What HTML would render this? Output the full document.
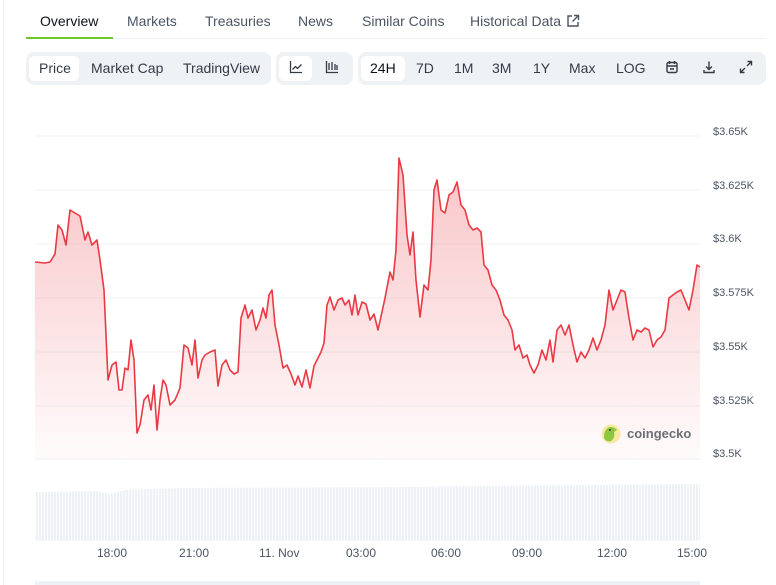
<!DOCTYPE html>
<html><head><meta charset="utf-8"><style>
*{box-sizing:border-box;margin:0;padding:0}
body{width:776px;height:585px;background:#fff;font-family:"Liberation Sans",sans-serif;position:relative;overflow:hidden;color:#4b5563}
.tabs{position:absolute;left:26px;top:0;width:740px;height:39px;border-bottom:1px solid #eceff3}
.tab{position:absolute;top:13px;font-size:14px;color:#4b5563}
.tab.a{color:#0d1217}
.ul{position:absolute;left:26px;top:37px;width:87px;height:2px;background:#6cc82b}
.grp{position:absolute;top:52px;height:33px;background:#eff2f5;border-radius:8px}
.btn{position:absolute;top:58px;font-size:14px;color:#333b47;line-height:20px}
.sel{position:absolute;top:56px;height:25px;background:#fff;border-radius:6px}
.yl{position:absolute;left:713px;font-size:11px;color:#4b5563}
.xl{position:absolute;top:546px;font-size:12px;color:#4b5563}
</style></head><body>
<div style="position:absolute;left:3px;top:0;width:1px;height:585px;background:#eef0f3"></div>
<div class="tabs"></div>
<div class="tab a" style="left:40px">Overview</div>
<div class="tab" style="left:127px">Markets</div>
<div class="tab" style="left:205px">Treasuries</div>
<div class="tab" style="left:298px">News</div>
<div class="tab" style="left:362px">Similar Coins</div>
<div class="tab" style="left:470px">Historical Data</div>
<svg style="position:absolute;left:566px;top:14px" width="14" height="14" viewBox="0 0 14 14" fill="none" stroke="#4b5563" stroke-width="1.4"><path d="M6 2H2v10h10V8M8 1.5h4.5V6M12.5 1.5L6.5 7.5"/></svg>
<div class="ul"></div>

<div class="grp" style="left:26px;width:245px"></div>
<div class="sel" style="left:29px;width:50px"></div>
<div class="btn" style="left:39px">Price</div>
<div class="btn" style="left:91px">Market Cap</div>
<div class="btn" style="left:183px">TradingView</div>
<div class="grp" style="left:276px;width:77px"></div>
<div class="sel" style="left:279px;width:33px"></div>
<svg style="position:absolute;left:289px;top:60px" width="14" height="14" viewBox="0 0 14 14" fill="none" stroke="#333b47" stroke-width="1.3"><path d="M1.5 1v11.5H13M3.5 9.5l3-3 2 2 4-4"/></svg>
<svg style="position:absolute;left:325px;top:60px" width="14" height="14" viewBox="0 0 14 14" fill="none" stroke="#333b47" stroke-width="1.3"><path d="M1.5 1v11.5H13M4 3v7M7 2v8M10 4v6M12 5v5"/></svg>
<div class="grp" style="left:358px;width:408px"></div>
<div class="sel" style="left:361px;width:44px"></div>
<div class="btn" style="left:370px;color:#0d1217">24H</div>
<div class="btn" style="left:416px">7D</div>
<div class="btn" style="left:454px">1M</div>
<div class="btn" style="left:492px">3M</div>
<div class="btn" style="left:533px">1Y</div>
<div class="btn" style="left:569px">Max</div>
<div class="btn" style="left:616px">LOG</div>
<svg style="position:absolute;left:665px;top:60px" width="14" height="14" viewBox="0 0 14 14" fill="none" stroke="#333b47" stroke-width="1.4"><rect x="2" y="2.5" width="10" height="10" rx="1.5"/><path d="M4.5 1v3M9.5 1v3M2 6h10M5 9h4"/></svg>
<svg style="position:absolute;left:702px;top:60px" width="14" height="14" viewBox="0 0 14 14" fill="none" stroke="#333b47" stroke-width="1.4"><path d="M7 1.5v7.5M4 6.5L7 9.5 10 6.5M2 10v2.5h10V10"/></svg>
<svg style="position:absolute;left:739px;top:60px" width="14" height="14" viewBox="0 0 14 14" fill="none" stroke="#333b47" stroke-width="1.4"><path d="M8.5 1.5h4v4M12.5 1.5L8 6M5.5 12.5h-4v-4M1.5 12.5L6 8"/></svg>

<svg style="position:absolute;left:0;top:0" width="776" height="585">
<defs><linearGradient id="g" x1="0" y1="0" x2="0" y2="1"><stop offset="0" stop-color="#ea3943" stop-opacity="0.3"/><stop offset="1" stop-color="#ea3943" stop-opacity="0.02"/></linearGradient>
<pattern id="v" width="3" height="60" patternUnits="userSpaceOnUse"><rect width="2.2" height="60" fill="#eef1f5"/></pattern></defs>
<g stroke="#eff1f4" stroke-width="1">
<line x1="35" y1="136" x2="700" y2="136"/><line x1="35" y1="190" x2="700" y2="190"/><line x1="35" y1="244" x2="700" y2="244"/><line x1="35" y1="298" x2="700" y2="298"/><line x1="35" y1="352" x2="700" y2="352"/><line x1="35" y1="406" x2="700" y2="406"/><line x1="35" y1="459" x2="700" y2="459"/>
</g>
<path d="M35 262 45 263 50 262 55 254 58 225 62 230 66 245 70 210 75 213 80 216 85 240 88 232 92 245 97 240 100 260 104 290 108 380 112 365 116 362 119 390 122 390 125 368 128 370 131 340 134 360 137 433 140 425 144 400 148 395 151 410 154 385 157 430 160 400 163 380 166 385 170 405 175 400 180 388 184 345 188 348 192 365 195 340 198 378 202 360 205 355 210 352 215 350 218 386 222 365 226 360 230 370 234 374 238 372 241 318 245 305 248 318 252 310 256 330 260 320 263 308 266 318 269 295 272 290 275 325 279 345 283 368 287 365 291 374 295 385 298 376 302 387 306 370 310 388 314 366 318 358 321 352 324 343 327 305 330 297 334 310 338 300 342 298 345 305 349 300 352 315 355 295 358 315 362 302 366 304 370 320 374 314 378 330 382 312 385 298 390 272 393 280 396 250 399 158 403 175 407 235 410 255 413 232 416 280 420 317 424 285 428 290 431 260 434 190 437 180 441 210 445 213 449 195 453 192 457 182 461 205 465 210 469 225 473 230 477 228 481 232 484 265 488 270 492 285 496 290 500 300 504 315 508 320 512 330 515 350 519 345 523 358 527 355 530 365 534 373 538 365 542 350 546 360 550 340 553 362 557 330 561 325 565 335 569 325 573 345 577 362 581 352 585 358 589 350 593 338 597 350 601 340 605 325 609 290 613 310 617 300 621 290 625 292 629 318 633 340 637 330 641 332 645 328 649 330 653 347 657 340 661 337 665 330 669 298 673 295 677 292 681 290 685 300 689 310 693 290 697 265 700 267 700 459 35 459Z" fill="url(#g)"/>
<polyline fill="none" stroke="#ea3943" stroke-width="1.6" stroke-linejoin="round" points="35,262 45,263 50,262 55,254 58,225 62,230 66,245 70,210 75,213 80,216 85,240 88,232 92,245 97,240 100,260 104,290 108,380 112,365 116,362 119,390 122,390 125,368 128,370 131,340 134,360 137,433 140,425 144,400 148,395 151,410 154,385 157,430 160,400 163,380 166,385 170,405 175,400 180,388 184,345 188,348 192,365 195,340 198,378 202,360 205,355 210,352 215,350 218,386 222,365 226,360 230,370 234,374 238,372 241,318 245,305 248,318 252,310 256,330 260,320 263,308 266,318 269,295 272,290 275,325 279,345 283,368 287,365 291,374 295,385 298,376 302,387 306,370 310,388 314,366 318,358 321,352 324,343 327,305 330,297 334,310 338,300 342,298 345,305 349,300 352,315 355,295 358,315 362,302 366,304 370,320 374,314 378,330 382,312 385,298 390,272 393,280 396,250 399,158 403,175 407,235 410,255 413,232 416,280 420,317 424,285 428,290 431,260 434,190 437,180 441,210 445,213 449,195 453,192 457,182 461,205 465,210 469,225 473,230 477,228 481,232 484,265 488,270 492,285 496,290 500,300 504,315 508,320 512,330 515,350 519,345 523,358 527,355 530,365 534,373 538,365 542,350 546,360 550,340 553,362 557,330 561,325 565,335 569,325 573,345 577,362 581,352 585,358 589,350 593,338 597,350 601,340 605,325 609,290 613,310 617,300 621,290 625,292 629,318 633,340 637,330 641,332 645,328 649,330 653,347 657,340 661,337 665,330 669,298 673,295 677,292 681,290 685,300 689,310 693,290 697,265 700,267"/>
<path d="M35 492 L95 491 L110 494 L125 490 L180 488 L400 487 L700 484 L700 540 L35 540Z" fill="url(#v)"/>
<line x1="35" y1="540" x2="700" y2="540" stroke="#eef1f5"/>
<rect x="35" y="581" width="665" height="4" fill="#eef1f5"/>
<circle cx="611" cy="434" r="9.5" fill="#f8e8a0"/>
<path d="M604 437c0-6 3-10 7-10 3 0 5 2 6 3l-3 2c1 3 0 7-3 9-4 1-7-1-7-4z" fill="#8dc63f"/>
<circle cx="610" cy="430" r="1" fill="#333"/>
</svg>
<div style="position:absolute;left:627px;top:426px;font-size:13px;font-weight:bold;color:#6b6f76">coingecko</div>
<div class="yl" style="top:126px">$3.65K</div>
<div class="yl" style="top:180px">$3.625K</div>
<div class="yl" style="top:233px">$3.6K</div>
<div class="yl" style="top:287px">$3.575K</div>
<div class="yl" style="top:341px">$3.55K</div>
<div class="yl" style="top:395px">$3.525K</div>
<div class="yl" style="top:448px">$3.5K</div>
<div class="xl" style="left:97px">18:00</div>
<div class="xl" style="left:179px">21:00</div>
<div class="xl" style="left:259px">11. Nov</div>
<div class="xl" style="left:346px">03:00</div>
<div class="xl" style="left:431px">06:00</div>
<div class="xl" style="left:512px">09:00</div>
<div class="xl" style="left:597px">12:00</div>
<div class="xl" style="left:677px">15:00</div>
</body></html>
